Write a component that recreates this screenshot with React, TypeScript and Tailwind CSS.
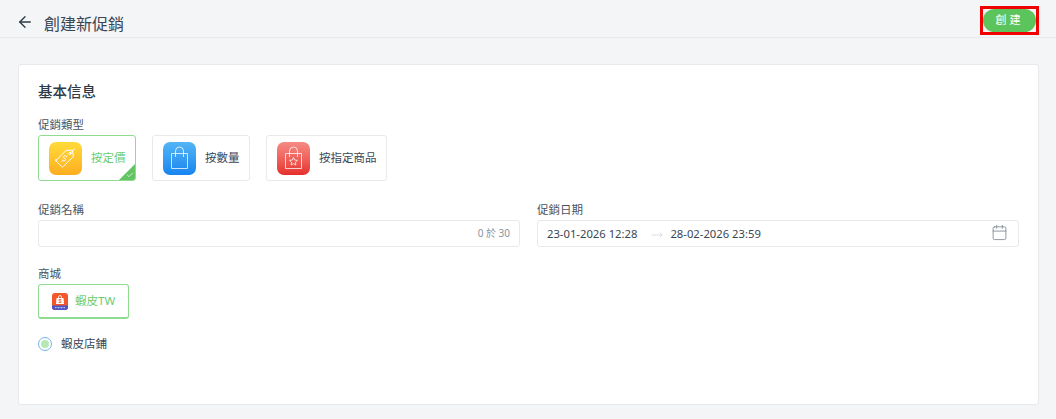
import { ArrowLeft, Calendar, Check, MoveRight } from 'lucide-react'

const font = { fontFamily: '"Noto Sans", "Noto Sans CJK TC", sans-serif' }

function TagIcon() {
  return (
    <div className="flex h-[33px] w-[33px] items-center justify-center rounded-[7px] bg-gradient-to-b from-[#ffdb3a] to-[#fdad1f]">
      <svg width="25" height="25" viewBox="0 0 25 25" fill="none" stroke="#fff" strokeWidth="1" strokeLinejoin="round" strokeLinecap="round">
        <path d="M3 14.500 13 4.500l6.500-.5.8 6.500-10 10a1.200 1.200 0 0 1-1.700 0l-5.600-5.600a1.200 1.200 0 0 1 0-1.400Z" />
        <circle cx="17" cy="7.500" r="1.100" />
        <path d="M18 6.500 21.500 3" />
        <path d="M13.500 10.500c-1-1-2.500-.8-3 0s0 1.600 1 1.800 1.600 1 1 1.900-2 .9-3 0M14 9.800l-.9.9M9.800 14.600l-.9.9" />
      </svg>
    </div>
  )
}

function BagIcon({ star }: { star?: boolean }) {
  return (
    <div className={star
      ? 'flex h-[33px] w-[33px] items-center justify-center rounded-[7px] bg-gradient-to-b from-[#f58a85] to-[#e62c2c]'
      : 'flex h-[33px] w-[33px] items-center justify-center rounded-[7px] bg-gradient-to-b from-[#53b5f5] to-[#1585f0]'}>
      <svg width="23" height="25" viewBox="0 0 23 25" fill="none" stroke="#fff" strokeOpacity="0.75" strokeWidth="1" strokeLinejoin="round">
        <path d="M3.500 7.500h16v15h-16z" />
        <path d="M7.500 11V5a4 4 0 0 1 8 0v6" />
        {star && <path d="m11.500 11.500 1.200 2.500 2.700.4-2 1.900.5 2.700-2.400-1.300-2.400 1.300.5-2.700-2-1.900 2.700-.4z" />}
      </svg>
    </div>
  )
}

function TypeCard({ label, icon, active, width }: { label: string; icon: React.ReactNode; active?: boolean; width: string }) {
  return (
    <div className={`relative flex h-[46px] items-center gap-[9px] overflow-hidden rounded-[3px] border pl-[10px] ${width} ${active ? 'border-[#8fdc8f]' : 'border-[#e8e9ec]'}`}>
      {icon}
      <span className={`text-[11.500px] ${active ? 'text-[#6ccb6c]' : 'text-[#3b4654]'}`}>{label}</span>
      {active && (
        <div className="absolute bottom-0 right-0 h-0 w-0 border-b-[16px] border-l-[16px] border-b-[#62c462] border-l-transparent">
          <Check className="absolute left-[-9px] top-[7px] text-white" size={8} strokeWidth={2} />
        </div>
      )}
    </div>
  )
}

export default function App() {
  return (
    <div style={font} className="flex h-[419px] w-[1056px] flex-col overflow-hidden bg-[#f4f5f7]">
      <header className="flex h-[38px] items-start justify-between border-b border-[#e8e9ec] pl-4 pr-[17px]">
        <div className="mt-[13px] flex items-start gap-[10px]">
          <ArrowLeft size={18} strokeWidth={1.8} className="text-[#2f3a47]" />
          <h1 className="mt-[3px] text-[16px] leading-none text-[#3b4654]">創建新促銷</h1>
        </div>
        <div className="mt-[6px] border-[3px] border-[#f00000]">
          <button className="flex h-[23px] w-[53px] items-center justify-center rounded-full bg-[#5cc45c] text-[11px] tracking-[3px] text-white">
            創建
          </button>
        </div>
      </header>

      <main className="pl-[18px] pt-[26px]">
        <section className="h-[341px] w-[1021px] rounded-[3px] border border-[#e8e9ec] bg-white pl-[19px] pt-[15px]">
          <h2 className="text-[14.500px] font-medium leading-[22px] text-[#2f3a47]">基本信息</h2>

          <p className="mt-[15px] text-[11.500px] leading-[16px] text-[#4a5561]">促銷類型</p>
          <div className="mt-[2px] flex gap-4">
            <TypeCard label="按定價" icon={<TagIcon />} active width="w-[98px]" />
            <TypeCard label="按數量" icon={<BagIcon />} width="w-[98px]" />
            <TypeCard label="按指定商品" icon={<BagIcon star />} width="w-[121px]" />
          </div>

          <div className="mt-[21px] flex gap-[17px]">
            <div className="w-[482px]">
              <p className="text-[11.500px] leading-[16px] text-[#4a5561]">促銷名稱</p>
              <div className="mt-[2px] flex h-[27px] items-center justify-end rounded-[3px] border border-[#e8e9ec] pr-[9px] text-[10px] text-[#8b939c]">
                0 於 30
              </div>
            </div>
            <div className="w-[482px]">
              <p className="text-[11.500px] leading-[16px] text-[#4a5561]">促銷日期</p>
              <div className="mt-[2px] flex h-[27px] items-center rounded-[3px] border border-[#e8e9ec] pl-[9px] pr-[10px] pt-[2px] text-[11.250px] text-[#3b4654]">
                <span>23-01-2026 12:28</span>
                <MoveRight size={12} strokeWidth={1} className="ml-[14px] text-[#b8bdc4]" />
                <span className="ml-[7px]">28-02-2026 23:59</span>
                <Calendar size={17} strokeWidth={1.2} className="mb-1 ml-auto text-[#7f8892]" />
              </div>
            </div>
          </div>

          <p className="mt-[19px] text-[11.500px] leading-[16px] text-[#4a5561]">商城</p>
          <div className="mt-[2px] flex h-[35px] w-[91px] items-center gap-[7px] rounded-[3px] border border-b-2 border-[#8fdc8f] pl-[13px]">
            <svg width="16" height="17" viewBox="0 0 16 17">
              <rect width="16" height="17" rx="3" fill="#f4572a" />
              <path d="M0 12.500h16v1.500a3 3 0 0 1-3 3H3a3 3 0 0 1-3-3z" fill="#4a55c4" />
              <path d="M4.500 5h7l.5 6H4z" fill="#fff" />
              <path d="M6.500 5V4a1.500 1.500 0 0 1 3 0v1" fill="none" stroke="#fff" strokeWidth="0.8" />
              <path d="M9.400 6.500H7v1.500h2v1.500H6.600" fill="none" stroke="#f4572a" strokeWidth="0.8" />
              <path d="M3 14.700h10" stroke="#fff" strokeWidth="0.8" strokeDasharray="1 0.5" />
            </svg>
            <span className="text-[11.500px] text-[#6ccb6c]">蝦皮TW</span>
          </div>

          <div className="mt-[17px] flex items-center gap-[9px]">
            <div className="flex h-[14px] w-[14px] items-center justify-center rounded-full border border-[#6fb6ee]">
              <div className="h-[8px] w-[8px] rounded-full bg-[#b5e8b5]" />
            </div>
            <span className="text-[11.500px] leading-[16px] text-[#3b4654]">蝦皮店鋪</span>
          </div>
        </section>
      </main>
    </div>
  )
}
